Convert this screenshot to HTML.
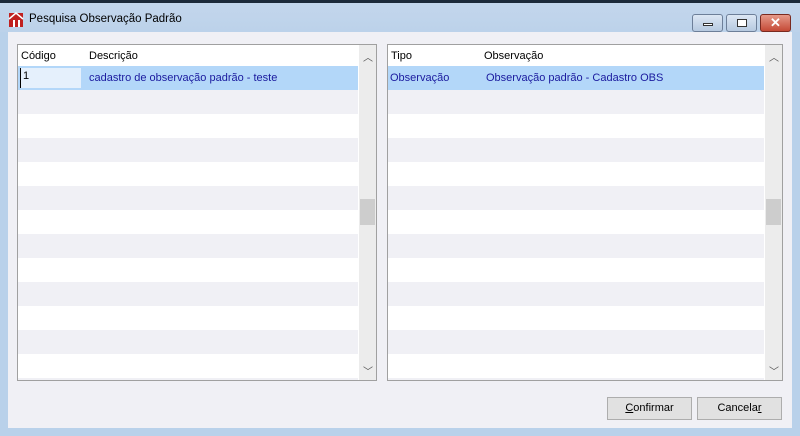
<!DOCTYPE html>
<html><head><style>
*{margin:0;padding:0;box-sizing:border-box}
body{width:800px;height:436px;background:#b9d1ea;font-family:"Liberation Sans",sans-serif;font-size:11px;position:relative;overflow:hidden}
.top{position:absolute;left:0;top:0;width:800px;height:3px;background:#1c2a3a}
.title{position:absolute;left:0;top:3px;width:800px;height:29px;background:linear-gradient(#c3d6ec,#bcd2ea)}
.title span{position:absolute;left:29px;top:10px;font-size:11.5px;color:#000}
.client{position:absolute;left:8px;top:32px;width:784px;height:396px;background:#f0f0f5}
.grid{position:absolute;top:44px;height:337px;background:#fff;border:1px solid #a0a0a0;overflow:hidden}
.hdr{position:absolute;left:0;top:0;height:22px;width:100%;}
.hdr div{position:absolute;top:5px}
.row{position:absolute;left:0;height:24px}
.sb{position:absolute;top:0;width:17px;height:100%;background:#ececec}
.thumb{position:absolute;left:1px;top:154px;width:15px;height:26px;background:#cdcdcd}
.btn{position:absolute;top:397px;width:85px;height:23px;background:#e1e1e1;border:1px solid #adadad;text-align:center;line-height:21px}
.wb{position:absolute;top:11px;height:18px;border:1px solid #6d7f99;border-radius:3px;background:linear-gradient(#dce7f4,#b6c9e0)}
</style></head><body>
<div class="top"></div>
<div class="title">
<svg style="position:absolute;left:8px;top:9px" width="16" height="16"><rect x="1" y="1" width="14" height="14" fill="#c02020"/><path d="M1 7 L8 1 L15 7" stroke="#fff" stroke-width="1.5" fill="none"/><rect x="5" y="8" width="2" height="7" fill="#fff"/><rect x="10" y="8" width="2" height="7" fill="#fff"/></svg>
<span>Pesquisa Observação Padrão</span>
<div class="wb" style="left:692px;width:31px"><div style="position:absolute;left:10px;top:8px;width:10px;height:3px;background:#fff;border:1px solid #333"></div></div>
<div class="wb" style="left:726px;width:31px"><div style="position:absolute;left:10px;top:4px;width:10px;height:8px;background:#fff;border:1px solid #333"></div></div>
<div class="wb" style="left:760px;width:31px;background:linear-gradient(#e69a8a,#c44a36);border-color:#7a2a20;color:#fff;text-align:center;font-weight:bold;font-size:13px;line-height:16px">✕</div>
</div>
<div class="client"></div>

<div class="grid" style="left:17px;width:360px">
<div class="hdr"><div style="left:3px">Código</div><div style="left:71px">Descrição</div></div>
<div class="row" style="top:21px;width:340px;background:#b3d7f9;color:#1a1a9e"><div style="position:absolute;left:2px;top:2px;width:61px;height:20px;background:#e5f0fc;padding:2px 2px;color:#000;border-left:1px solid #000">1</div><div style="position:absolute;left:71px;top:6px">cadastro de observação padrão - teste</div></div>
<div class="row" style="top:45px;width:340px;background:#f0f0f5"></div>
<div class="row" style="top:93px;width:340px;background:#f0f0f5"></div>
<div class="row" style="top:141px;width:340px;background:#f0f0f5"></div>
<div class="row" style="top:189px;width:340px;background:#f0f0f5"></div>
<div class="row" style="top:237px;width:340px;background:#f0f0f5"></div>
<div class="row" style="top:285px;width:340px;background:#f0f0f5"></div>
<div class="row" style="top:333px;width:340px;background:#f0f0f5"></div>
<div class="sb" style="left:341px"><div style="position:absolute;left:4px;top:4px;font-size:10px;color:#555">︿</div><div class="thumb"></div><div style="position:absolute;left:4px;top:318px;font-size:10px;color:#555">﹀</div></div>
</div>

<div class="grid" style="left:387px;width:396px">
<div class="hdr"><div style="left:3px">Tipo</div><div style="left:96px">Observação</div></div>
<div class="row" style="top:21px;width:376px;background:#b3d7f9;color:#1a1a9e"><div style="position:absolute;left:2px;top:6px">Observação</div><div style="position:absolute;left:98px;top:6px">Observação padrão - Cadastro OBS</div></div>
<div class="row" style="top:45px;width:376px;background:#f0f0f5"></div>
<div class="row" style="top:93px;width:376px;background:#f0f0f5"></div>
<div class="row" style="top:141px;width:376px;background:#f0f0f5"></div>
<div class="row" style="top:189px;width:376px;background:#f0f0f5"></div>
<div class="row" style="top:237px;width:376px;background:#f0f0f5"></div>
<div class="row" style="top:285px;width:376px;background:#f0f0f5"></div>
<div class="row" style="top:333px;width:376px;background:#f0f0f5"></div>
<div class="sb" style="left:377px"><div style="position:absolute;left:4px;top:4px;font-size:10px;color:#555">︿</div><div class="thumb"></div><div style="position:absolute;left:4px;top:318px;font-size:10px;color:#555">﹀</div></div>
</div>

<div class="btn" style="left:607px"><u>C</u>onfirmar</div>
<div class="btn" style="left:697px">Cancela<u>r</u></div>
</body></html>
